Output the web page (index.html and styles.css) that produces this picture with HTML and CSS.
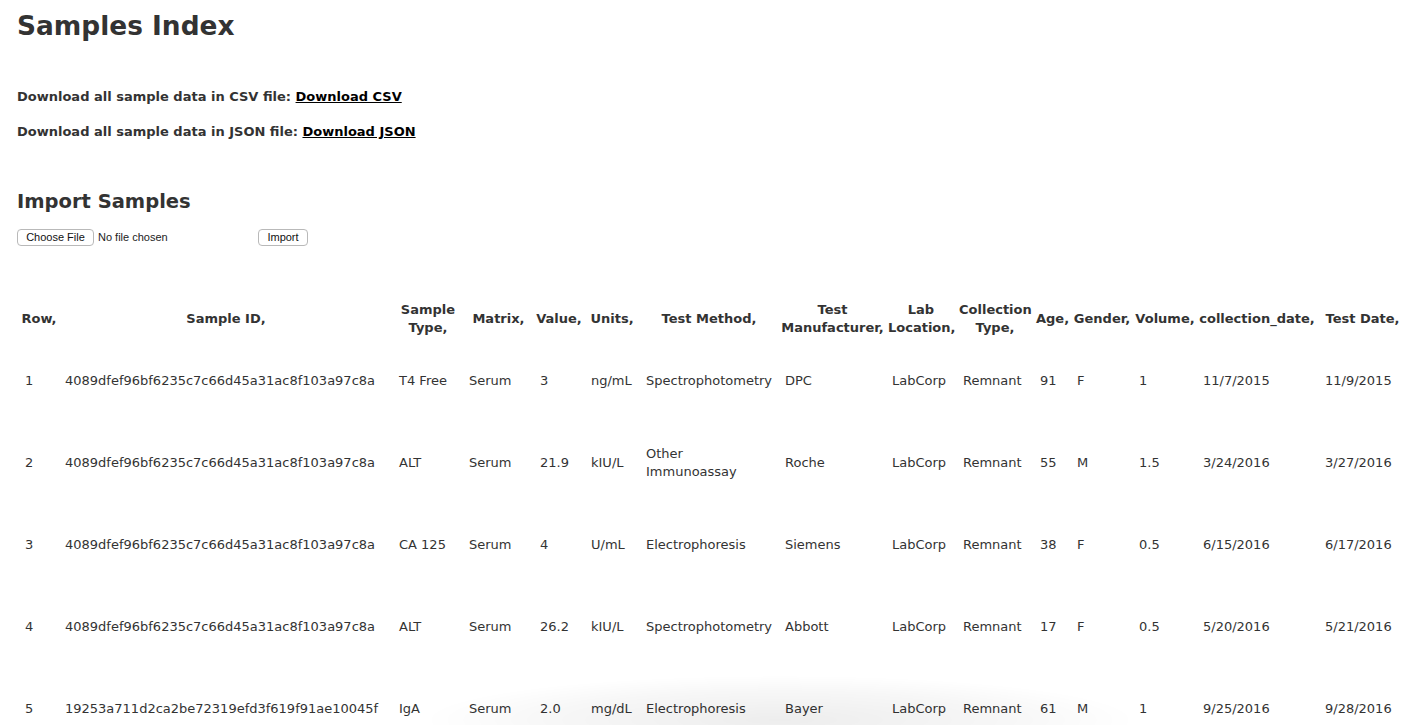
FILE: index.html
```html
<!DOCTYPE html>
<html>
<head>
<meta charset="utf-8">
<title>Samples Index</title>
<link rel="stylesheet" href="styles.css">
</head>
<body>
<h1 class="title">Samples Index</h1>
<p class="dl dl-first">Download all sample data in CSV file: <a href="#">Download CSV</a></p>
<p class="dl">Download all sample data in JSON file: <a href="#">Download JSON</a></p>

<h2 class="subtitle">Import Samples</h2>
<form class="import-form">
  <div class="file-input">
    <button type="button" class="btn btn-choose">Choose File</button>
    <span class="file-name">No file chosen</span>
  </div>
  <button type="button" class="btn btn-import">Import</button>
</form>

<table class="samples">
  <colgroup>
    <col class="c-row"><col class="c-id"><col class="c-type"><col class="c-matrix"><col class="c-value"><col class="c-units"><col class="c-method"><col class="c-manu"><col class="c-lab"><col class="c-coll"><col class="c-age"><col class="c-gender"><col class="c-vol"><col class="c-cdate"><col class="c-tdate">
  </colgroup>
  <thead>
    <tr>
      <th class="g4">Row,</th>
      <th class="g4">Sample ID,</th>
      <th class="g4">Sample Type,</th>
      <th class="g4">Matrix,</th>
      <th class="g5">Value,</th>
      <th class="g5">Units,</th>
      <th class="g5">Test Method,</th>
      <th class="g4">Test Manufacturer,</th>
      <th class="g5">Lab Location,</th>
      <th class="g5">Collection Type,</th>
      <th class="g5">Age,</th>
      <th class="g4">Gender,</th>
      <th class="g4">Volume,</th>
      <th class="g6">collection_date,</th>
      <th class="g0">Test Date,</th>
    </tr>
  </thead>
  <tbody>
    <tr>
      <td>1</td><td>4089dfef96bf6235c7c66d45a31ac8f103a97c8a</td><td>T4 Free</td><td>Serum</td><td>3</td><td>ng/mL</td><td>Spectrophotometry</td><td>DPC</td><td>LabCorp</td><td>Remnant</td><td>91</td><td>F</td><td>1</td><td>11/7/2015</td><td>11/9/2015</td>
    </tr>
    <tr>
      <td>2</td><td>4089dfef96bf6235c7c66d45a31ac8f103a97c8a</td><td>ALT</td><td>Serum</td><td>21.9</td><td>kIU/L</td><td>Other Immunoassay</td><td>Roche</td><td>LabCorp</td><td>Remnant</td><td>55</td><td>M</td><td>1.5</td><td>3/24/2016</td><td>3/27/2016</td>
    </tr>
    <tr>
      <td>3</td><td>4089dfef96bf6235c7c66d45a31ac8f103a97c8a</td><td>CA 125</td><td>Serum</td><td>4</td><td>U/mL</td><td>Electrophoresis</td><td>Siemens</td><td>LabCorp</td><td>Remnant</td><td>38</td><td>F</td><td>0.5</td><td>6/15/2016</td><td>6/17/2016</td>
    </tr>
    <tr>
      <td>4</td><td>4089dfef96bf6235c7c66d45a31ac8f103a97c8a</td><td>ALT</td><td>Serum</td><td>26.2</td><td>kIU/L</td><td>Spectrophotometry</td><td>Abbott</td><td>LabCorp</td><td>Remnant</td><td>17</td><td>F</td><td>0.5</td><td>5/20/2016</td><td>5/21/2016</td>
    </tr>
    <tr>
      <td>5</td><td>19253a711d2ca2be72319efd3f619f91ae10045f</td><td>IgA</td><td>Serum</td><td>2.0</td><td>mg/dL</td><td>Electrophoresis</td><td>Bayer</td><td>LabCorp</td><td>Remnant</td><td>61</td><td>M</td><td>1</td><td>9/25/2016</td><td>9/28/2016</td>
    </tr>
  </tbody>
</table>
<div class="bottom-shade"></div>
</body>
</html>
```

FILE: styles.css
```css
html {
  scrollbar-width: none;
}
html::-webkit-scrollbar {
  display: none;
}
body {
  margin: 0;
  padding: 0 17px;
  font-family: "DejaVu Sans", Verdana, sans-serif;
  font-size: 13px;
  line-height: 18px;
  color: #333;
  background: #fff;
}
.title {
  font-size: 26.4px;
  line-height: 30px;
  font-weight: bold;
  margin: 11px 0 0;
}
.dl {
  font-weight: bold;
  margin: 17px 0 0;
}
.dl-first {
  margin-top: 47px;
}
.dl a {
  color: #000;
  text-decoration: underline;
}
.subtitle {
  font-size: 19.5px;
  line-height: 24px;
  font-weight: bold;
  margin: 49px 0 0;
}
.import-form {
  display: flex;
  align-items: center;
  margin: 14px 0 0;
  gap: 3px;
}
.file-input {
  display: flex;
  align-items: center;
  width: 238px;
  gap: 4px;
}
.btn {
  box-sizing: border-box;
  height: 17px;
  padding: 0;
  border: 1px solid #b9b9b9;
  border-radius: 4px;
  background: #fff;
  color: #111;
  font-family: "Liberation Sans", Arial, sans-serif;
  font-size: 11px;
  line-height: 14px;
  text-align: center;
}
.btn-choose {
  width: 77px;
}
.btn-import {
  width: 50px;
}
.file-name {
  font-family: "Liberation Sans", Arial, sans-serif;
  font-size: 11px;
  color: #222;
}
.samples {
  table-layout: fixed;
  border-collapse: separate;
  border-spacing: 0;
  width: 1383px;
  margin: 52px 0 0 4px;
}
.samples th {
  font-weight: bold;
  text-align: center;
  vertical-align: middle;
  height: 42px;
  padding: 0;
  box-sizing: border-box;
}
.samples th.g0 { padding-right: 0; }
.samples th.g4 { padding-right: 4px; }
.samples th.g5 { padding-right: 5px; }
.samples th.g6 { padding-right: 6px; }
.samples td {
  height: 82px;
  padding: 0 5px 0 4px;
  vertical-align: middle;
  text-align: left;
  white-space: normal;
}
.c-row { width: 40px; }
.c-id { width: 334px; }
.c-type { width: 70px; }
.c-matrix { width: 71px; }
.c-value { width: 51px; }
.c-units { width: 55px; }
.c-method { width: 139px; }
.c-manu { width: 107px; }
.c-lab { width: 71px; }
.c-coll { width: 77px; }
.c-age { width: 37px; }
.c-gender { width: 62px; }
.c-vol { width: 64px; }
.c-cdate { width: 122px; }
.c-tdate { width: 83px; }
.bottom-shade {
  position: fixed;
  left: 420px;
  bottom: -40px;
  width: 720px;
  height: 90px;
  pointer-events: none;
  background: radial-gradient(ellipse at center, rgba(0, 0, 0, 0.07) 0%, rgba(0, 0, 0, 0.03) 45%, rgba(0, 0, 0, 0) 70%);
}
```
